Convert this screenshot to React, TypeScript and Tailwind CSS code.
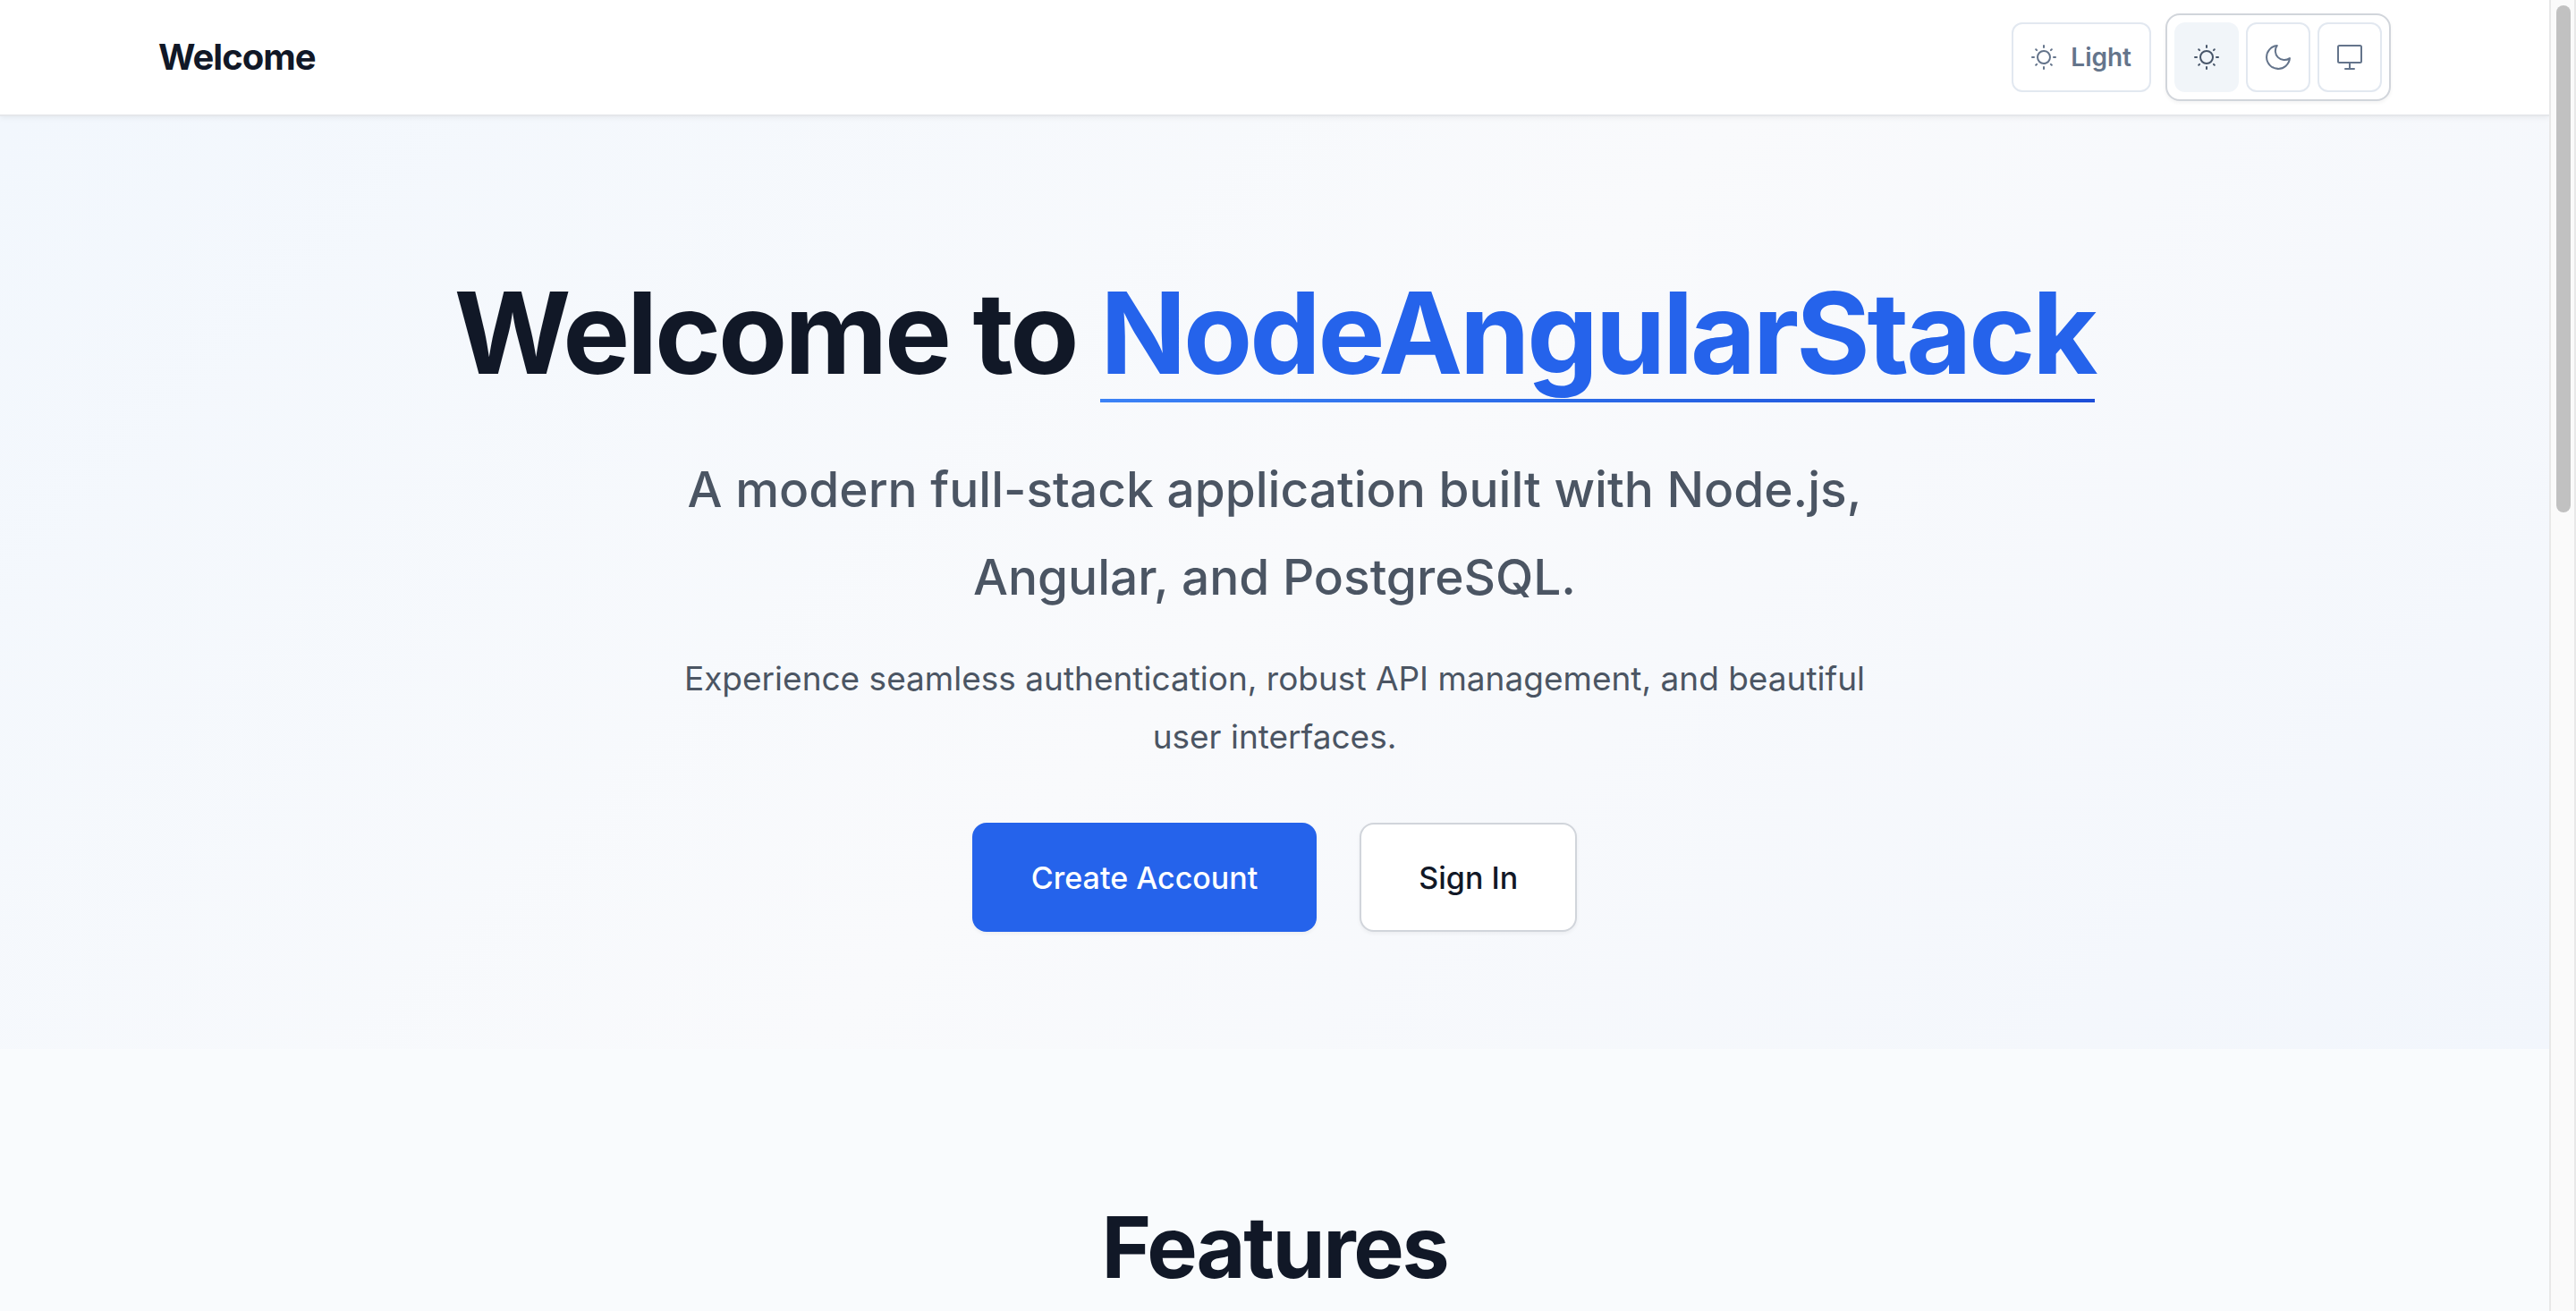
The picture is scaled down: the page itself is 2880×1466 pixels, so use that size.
import { useState, type ReactNode } from 'react';

function Sun() {
  return (
    <svg aria-hidden="true" viewBox="0 0 32 32" className="size-8" fill="none" stroke="currentColor" strokeWidth="2" strokeLinecap="round">
      <circle cx="16" cy="16" r="7" />
      <path d="M16 3v2M16 27v2M3 16h2M27 16h2M7.2 7.2l.9.9M23.9 23.9l.9.9M7.2 24.8l.9-.9M23.9 8.1l.9-.9" />
    </svg>
  );
}

function Moon() {
  return (
    <svg aria-hidden="true" viewBox="0 0 32 32" className="size-8" fill="none" stroke="currentColor" strokeWidth="1.4" strokeLinecap="round" strokeLinejoin="round">
      <path transform="translate(-1.3 -1.3) scale(1.44)" d="M21 12.79A9 9 0 1 1 11.21 3 7 7 0 0 0 21 12.79z" />
    </svg>
  );
}

function Monitor() {
  return (
    <svg aria-hidden="true" viewBox="0 0 32 32" className="size-8" fill="none" stroke="currentColor" strokeWidth="2" strokeLinecap="round" strokeLinejoin="round">
      <rect x="3" y="3" width="26" height="19" rx="1.5" />
      <path d="M16 22v7M11 29h10" />
    </svg>
  );
}

const modes: { name: string; icon: ReactNode }[] = [
  { name: 'Light', icon: <Sun /> },
  { name: 'Dark', icon: <Moon /> },
  { name: 'System', icon: <Monitor /> },
];

export default function App() {
  const [mode, setMode] = useState('Light');
  return (
    <div className="flex h-screen overflow-hidden bg-[#f9fbfd] font-['Inter',sans-serif] text-[#111827]">
      <div className="min-w-0 flex-1 overflow-hidden">
        <header className="relative border-b-2 border-[#e5e7eb] bg-white shadow-[0_2px_6px_rgba(0,0,0,0.06)]">
          <div className="mx-auto flex h-32 max-w-[2560px] items-center justify-between px-8">
            <span className="text-[40px] leading-14 font-bold tracking-tight">Welcome</span>
            <div className="flex items-center gap-4">
              <button type="button" className="flex h-[78px] items-center gap-3.5 rounded-xl border-2 border-[#e2e8f0] bg-white pr-5 pl-[18px] text-[28px] font-semibold text-[#64748b]">
                <Sun />
                Light
              </button>
              <div className="flex gap-2 rounded-2xl border-2 border-[#d1d5db] bg-white p-2 shadow-[0_2px_4px_rgba(0,0,0,0.05)]">
                {modes.map((m) => (
                  <button
                    key={m.name}
                    type="button"
                    aria-label={m.name}
                    aria-pressed={mode === m.name}
                    onClick={() => setMode(m.name)}
                    className={
                      mode === m.name
                        ? 'flex h-[78px] w-18 items-center justify-center rounded-xl bg-[#f1f5f9] text-[#475569]'
                        : 'flex h-[78px] w-18 items-center justify-center rounded-xl border-2 border-[#e2e8f0] bg-white text-[#64748b]'
                    }
                  >
                    {m.icon}
                  </button>
                ))}
              </div>
            </div>
          </div>
        </header>
        <main>
          <section className="bg-linear-135 from-[#f2f7fd] via-[#f9fafc] to-[#f2f6fc] px-8 pt-[160px] pb-[131px] text-center">
            <h1 className="text-[126px] leading-[164px] font-bold tracking-tight">
              Welcome to{' '}
              <span className="relative inline-block text-[#2563eb]">
                NodeAngularStack
                <span className="absolute inset-x-0 bottom-1 h-1 bg-linear-to-r from-[#3b82f6] to-[#1d4ed8]" />
              </span>
            </h1>
            <p className="mx-auto mt-11 max-w-[1344px] text-[55px] leading-[98px] font-medium text-[#4b5563]">
              A modern full-stack application built with Node.js, Angular, and PostgreSQL.
            </p>
            <p className="mx-auto mt-8 max-w-[1344px] text-[37px] leading-[65px] text-[#4b5563]">
              Experience seamless authentication, robust API management, and beautiful user interfaces.
            </p>
            <div className="mt-16 flex justify-center gap-12">
              <a href="#register" className="flex h-[122px] items-center rounded-2xl bg-[#2563eb] px-[66px] text-[34px] font-medium text-white shadow-[0_2px_4px_rgba(0,0,0,0.05)]">
                Create Account
              </a>
              <a href="#login" className="flex h-[122px] items-center rounded-2xl border-2 border-[#d1d5db] bg-white px-16 text-[34px] font-medium shadow-[0_2px_4px_rgba(0,0,0,0.05)]">
                Sign In
              </a>
            </div>
          </section>
          <section className="px-8 pt-[162px] text-center">
            <h2 className="text-[95px] leading-[120px] font-bold tracking-tight">Features</h2>
          </section>
        </main>
      </div>
      <div aria-hidden="true" className="w-[30px] shrink-0 border-x-2 border-[#e8e8e8] bg-[#fafafa] px-1.5 pt-1.5">
        <div className="h-[567px] w-4 rounded-full bg-[#c1c1c1]" />
      </div>
    </div>
  );
}
